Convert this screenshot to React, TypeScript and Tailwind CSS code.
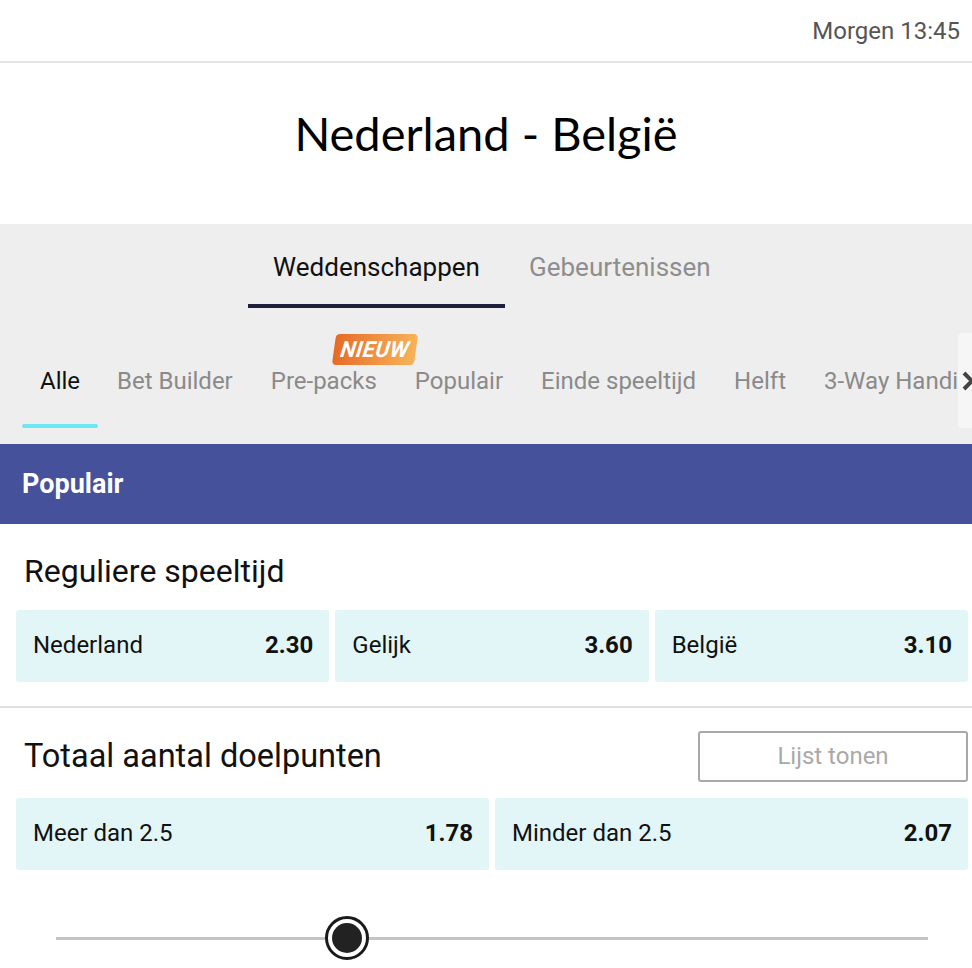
import React from "react";

const subTabs = ["Bet Builder", "Pre-packs", "Populair", "Einde speeltijd", "Helft", "3-Way Handicap"];

function Odd({ label, value }: { label: string; value: string }) {
  return (
    <div className="flex-1 h-[72px] rounded-[3px] bg-[#e2f6f8] flex items-center justify-between pl-[17px] pr-[16px] pb-[2px]">
      <span className="text-[24px] text-[#111]">{label}</span>
      <span className="text-[24px] font-bold text-[#111]">{value}</span>
    </div>
  );
}

export default function App() {
  return (
    <div className="w-[972px] h-[968px] overflow-hidden bg-white" style={{ fontFamily: "Roboto, 'Liberation Sans', sans-serif" }}>
      <div className="h-[63px] flex items-center justify-end pr-[12px] border-b-2 border-[#e3e3e3]">
        <span className="text-[24px] text-[#555]">Morgen 13:45</span>
      </div>
      <div className="h-[161px] flex items-center justify-center pb-[20px]">
        <span className="text-[47px] text-black" style={{ fontFamily: "Lato, sans-serif" }}>Nederland - België</span>
      </div>
      <div className="bg-[#eeeeee] h-[220px]">
        <div className="flex justify-center pt-[20px]">
          <div className="flex">
            <div className="w-[257px] h-[64px] flex flex-col items-center">
              <span className="text-[26px] text-[#111] mt-[4px]">Weddenschappen</span>
              <div className="mt-auto w-full h-[4px] bg-[#1e1f3a]" />
            </div>
            <div className="w-[219px] h-[64px] flex pl-[24px]">
              <span className="text-[26px] text-[#8e8e8e] mt-[4px]">Gebeurtenissen</span>
            </div>
          </div>
        </div>
        <div className="relative flex h-[136px] pl-[22px] overflow-hidden">
          <div className="relative shrink-0 w-[76px] flex justify-center items-center pt-[10px]">
            <span className="text-[24px] text-[#111]">Alle</span>
            <div className="absolute bottom-[16px] left-0 right-0 h-[4px] rounded-full bg-[#6ee7f5]" />
          </div>
          {subTabs.map((t) => (
            <div key={t} className="relative shrink-0 px-[19px] flex items-center whitespace-nowrap pt-[10px]">
              <span className="text-[24px] text-[#8a8a8a]">{t}</span>
              {t === "Pre-packs" && (
                <div className="absolute top-[26px] left-[82px] w-[82px] h-[31px] rounded-[4px] bg-gradient-to-r from-[#e66b25] to-[#f6b35a] flex items-center justify-center" style={{ transform: "skewX(-8deg)" }}>
                  <span className="text-[22px] font-bold italic text-white tracking-[0.5px]">NIEUW</span>
                </div>
              )}
            </div>
          ))}
          <div className="absolute right-0 top-[25px] h-[95px] w-[14px] bg-[#f6f6f6] rounded-l-[4px]" />
          <svg width="14" height="22" viewBox="0 0 14 22" className="absolute left-[961px] top-[62px]">
            <path d="M3 3 L11 11 L3 19" stroke="#444" strokeWidth="4" fill="none" />
          </svg>
        </div>
      </div>
      <div className="h-[80px] bg-[#46519b] flex items-center pl-[22px]">
        <span className="text-[27px] font-bold text-white">Populair</span>
      </div>
      <div className="pl-[16px] pr-[4px]">
        <div className="h-[86px] flex items-center pl-[8px] pt-[8px]">
          <span className="text-[32px] text-[#111]">Reguliere speeltijd</span>
        </div>
        <div className="flex gap-[6px]">
          <Odd label="Nederland" value="2.30" />
          <Odd label="Gelijk" value="3.60" />
          <Odd label="België" value="3.10" />
        </div>
      </div>
      <div className="mt-[24px] border-t-2 border-[#e0e0e0]" />
      <div className="pl-[16px] pr-[4px]">
        <div className="h-[90px] flex items-center justify-between pl-[8px] pt-[6px]">
          <span className="text-[32.5px] text-[#111]">Totaal aantal doelpunten</span>
          <div className="w-[270px] h-[51px] border-2 border-[#a8a8a8] rounded-[3px] flex items-center justify-center">
            <span className="text-[24px] text-[#a9a9a9]">Lijst tonen</span>
          </div>
        </div>
        <div className="flex gap-[6px]">
          <Odd label="Meer dan 2.5" value="1.78" />
          <Odd label="Minder dan 2.5" value="2.07" />
        </div>
      </div>
      <div className="relative ml-[56px] mr-[44px] mt-[46px] h-[44px] flex items-center">
        <div className="w-full h-[3px] bg-[#c4c4c4]" />
        <div className="absolute left-[269px] top-0 w-[44px] h-[44px] rounded-full border-[3px] border-[#1a1a1a] bg-white flex items-center justify-center">
          <div className="w-[30px] h-[30px] rounded-full bg-[#222]" />
        </div>
      </div>
    </div>
  );
}
